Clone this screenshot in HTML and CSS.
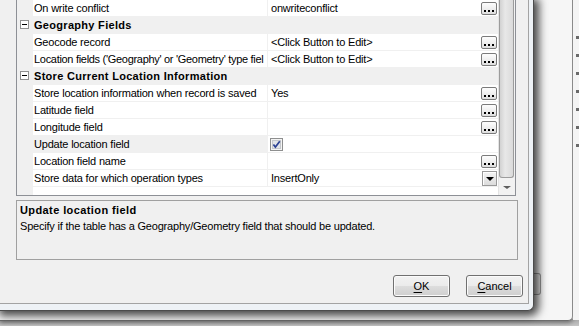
FILE: index.html
```html
<!DOCTYPE html>
<html lang="en">
<head>
  <meta charset="UTF-8">
  <title>Geography Settings</title>
  <link rel="stylesheet" href="styles.css">
</head>
<body>
  <div class="desktop">
    <div class="backwin">
      <div class="dialog">
        <div class="client">
          <div class="grid">
            <div class="rows">
              <div class="row">
                <span class="gutter"></span>
                <span class="name">On write conflict</span>
                <span class="value">onwriteconflict<span class="dots"></span></span>
              </div>
              <div class="row cat">
                <span class="gutter"><i class="toggle"></i></span>
                <span class="cat-name">Geography Fields</span>
              </div>
              <div class="row">
                <span class="gutter"></span>
                <span class="name">Geocode record</span>
                <span class="value">&lt;Click Button to Edit&gt;<span class="dots"></span></span>
              </div>
              <div class="row">
                <span class="gutter"></span>
                <span class="name tight">Location fields ('Geography' or 'Geometry' type fiel</span>
                <span class="value">&lt;Click Button to Edit&gt;<span class="dots"></span></span>
              </div>
              <div class="row cat">
                <span class="gutter"><i class="toggle"></i></span>
                <span class="cat-name">Store Current Location Information</span>
              </div>
              <div class="row">
                <span class="gutter"></span>
                <span class="name">Store location information when record is saved</span>
                <span class="value">Yes<span class="dots"></span></span>
              </div>
              <div class="row">
                <span class="gutter"></span>
                <span class="name">Latitude field</span>
                <span class="value"><span class="dots"></span></span>
              </div>
              <div class="row">
                <span class="gutter"></span>
                <span class="name">Longitude field</span>
                <span class="value"><span class="dots"></span></span>
              </div>
              <div class="row selected">
                <span class="gutter"></span>
                <span class="name">Update location field</span>
                <span class="value">
                  <svg class="check" width="13" height="13" viewBox="0 0 13 13">
                    <rect x="0.5" y="0.5" width="12" height="12" fill="#f4f4f4" stroke="#8e8f8f"/>
                    <rect x="2.5" y="2.5" width="8" height="8" fill="#e2e4e8" stroke="#c5c8cc"/>
                    <path d="M3.4 6.4 L5.4 9 L9.8 3.2" fill="none" stroke="#2c4294" stroke-width="1.7"/>
                  </svg>
                </span>
              </div>
              <div class="row">
                <span class="gutter"></span>
                <span class="name">Location field name</span>
                <span class="value"><span class="dots"></span></span>
              </div>
              <div class="row">
                <span class="gutter"></span>
                <span class="name">Store data for which operation types</span>
                <span class="value">InsertOnly<span class="drop"></span></span>
              </div>
              <div class="row-fill"><span class="gutter"></span></div>
            </div>
            <div class="scrollbar">
              <div class="thumb"></div>
              <div class="arrow"></div>
            </div>
          </div>

          <div class="desc">
            <div class="desc-title">Update location field</div>
            <div>Specify if the table has a Geography/Geometry field that should be updated.</div>
          </div>

          <div class="actions">
            <button type="button"><u>O</u>K</button>
            <button type="button"><u>C</u>ancel</button>
          </div>
        </div>
      </div>
      <div class="behind"><span class="sliver"></span></div>
    </div>
    <div class="edge">
      <i></i><i></i><i></i><i></i><i></i><i></i><i></i>
    </div>
  </div>
</body>
</html>
```

FILE: styles.css
```css
body {
  margin: 0;
  width: 579px;
  height: 326px;
  overflow: hidden;
  font-family: "Liberation Sans", Arial, sans-serif;
  font-size: 11px;
  color: #000;
  background: #c8c8c8;
}

.desktop {
  display: flex;
  align-items: flex-start;
  height: 326px;
  overflow: hidden;
  background: linear-gradient(#f2f2f2 0, #f2f2f2 318px, #a8a8a8 319px, #c6c6c6 326px);
}

.backwin {
  display: flex;
  align-items: flex-start;
  width: 572px;
  height: 320px;
  background: #f6f6f6;
  border-right: 1px solid #8a8a8a;
  border-bottom: 1px solid #6e6e6e;
  border-bottom-right-radius: 5px;
  box-shadow: 0 2px 4px rgba(0, 0, 0, 0.35);
}

.dialog {
  width: 529px;
  height: 304px;
  padding: 0 4px 6px 0;
  background: #eef2f6;
  border-right: 1px solid #4c4c4c;
  border-bottom: 1px solid #4c4c4c;
  border-bottom-right-radius: 6px;
  box-shadow: 2px 2px 9px 3px rgba(0, 0, 0, 0.7);
  position: relative;
  z-index: 1;
}

.client {
  display: flex;
  flex-direction: column;
  width: 512px;
  height: 303px;
  padding-left: 16px;
  background: #f0f0f0;
  border-right: 1px solid #a3a3a3;
  border-bottom: 1px solid #a3a3a3;
}

/* property grid */
.grid {
  display: flex;
  width: 498px;
  height: 195px;
  border: 1px solid #8d9096;
  border-top: none;
  background: #fff;
}

.rows {
  width: 482px;
  display: flex;
  flex-direction: column;
}

.row {
  display: flex;
  height: 16px;
  line-height: 16px;
  border-bottom: 1px solid #f0f0f0;
  white-space: nowrap;
  letter-spacing: -0.2px;
}

.row-fill {
  flex: 1;
  display: flex;
}

.gutter {
  width: 16px;
  flex: none;
  background: #f0f0f0;
  position: relative;
}

.name {
  width: 233px;
  padding-left: 1px;
  flex: none;
  overflow: hidden;
  border-right: 1px solid #f0f0f0;
}

.name.tight {
  letter-spacing: -0.3px;
}

.value {
  flex: 1;
  display: flex;
  padding-left: 3px;
  padding-right: 1px;
}

.cat {
  background: #f0f0f0;
}

.cat-name {
  padding-left: 1px;
  font-weight: bold;
  letter-spacing: 0.3px;
}

.toggle {
  position: absolute;
  left: 3px;
  top: 3px;
  width: 7px;
  height: 7px;
  border: 1px solid #919191;
  background: #fff;
}

.toggle::after {
  content: "";
  position: absolute;
  left: 1px;
  top: 3px;
  width: 5px;
  height: 1px;
  background: #000;
}

.selected .name {
  background: #f0f0f0;
}

.dots {
  margin: 2px 0 0 auto;
  width: 14px;
  height: 11px;
  border: 1px solid #7b7b7b;
  border-radius: 2px;
  background: linear-gradient(#fdfdfd, #f0f0f0 50%, #dedede);
  position: relative;
}

.dots::after {
  content: "";
  position: absolute;
  left: 2px;
  top: 7px;
  width: 2px;
  height: 2px;
  background: #000;
  box-shadow: 4px 0 #000, 8px 0 #000;
}

.drop {
  margin: 1px 0 0 auto;
  width: 13px;
  height: 13px;
  border: 1px solid #9a9a9a;
  box-shadow: inset 1px 1px #fff;
  background: linear-gradient(#f4f4f4, #dcdcdc);
  position: relative;
}

.drop::after {
  content: "";
  position: absolute;
  left: 3px;
  top: 5px;
  border-left: 4px solid transparent;
  border-right: 4px solid transparent;
  border-top: 4px solid #000;
}

.check {
  margin-top: 2px;
  margin-left: -1px;
}

.scrollbar {
  width: 16px;
  display: flex;
  flex-direction: column;
  background: #f2f2f2;
  border-left: 1px solid #e4e4e4;
}

.thumb {
  height: 177px;
  width: 13px;
  border: 1px solid #9c9c9c;
  border-top: none;
  border-radius: 0 0 3px 3px;
  background: linear-gradient(90deg, #d2d2d2, #e8e8e8 40%, #dadada);
}

.arrow {
  margin: 8px 0 0 4px;
  width: 0;
  height: 0;
  border-left: 4px solid transparent;
  border-right: 4px solid transparent;
  border-top: 3px solid #5e5e5e;
}

/* description */
.desc {
  margin-top: 4px;
  width: 494px;
  height: 56px;
  padding: 1px 3px;
  border: 1px solid #a0a0a0;
  line-height: 16px;
  letter-spacing: -0.2px;
}

.desc-title {
  font-weight: bold;
  letter-spacing: 0.4px;
}

.actions {
  display: flex;
  justify-content: flex-end;
  gap: 16px;
  margin-top: 15px;
  padding-right: 5px;
}

button {
  box-sizing: border-box;
  width: 57px;
  height: 22px;
  padding: 0;
  font-family: inherit;
  font-size: 11px;
  color: #000;
  border: 1px solid #707070;
  border-radius: 3px;
  background: linear-gradient(#f2f2f2, #ebebeb 50%, #dddddd 51%, #cfcfcf);
  box-shadow: inset 0 0 0 1px #fbfbfb;
}

button u {
  text-underline-offset: 2px;
}

/* window behind the dialog */
.behind {
  flex: 1;
  height: 310px;
  display: flex;
  flex-direction: column;
  justify-content: flex-end;
}

.sliver {
  width: 6px;
  height: 20px;
  margin-bottom: 15px;
  border: 1px solid #9a9a9a;
  border-left: none;
  border-radius: 0 3px 3px 0;
  background: #e6e6e6;
}

.edge {
  flex: 1;
  height: 284px;
  display: flex;
  flex-direction: column;
  padding-top: 36px;
  gap: 15px;
  background: #f4f4f4;
}

.edge i {
  margin-left: 3px;
  width: 3px;
  height: 3px;
  background: #6a6a6a;
}
```
